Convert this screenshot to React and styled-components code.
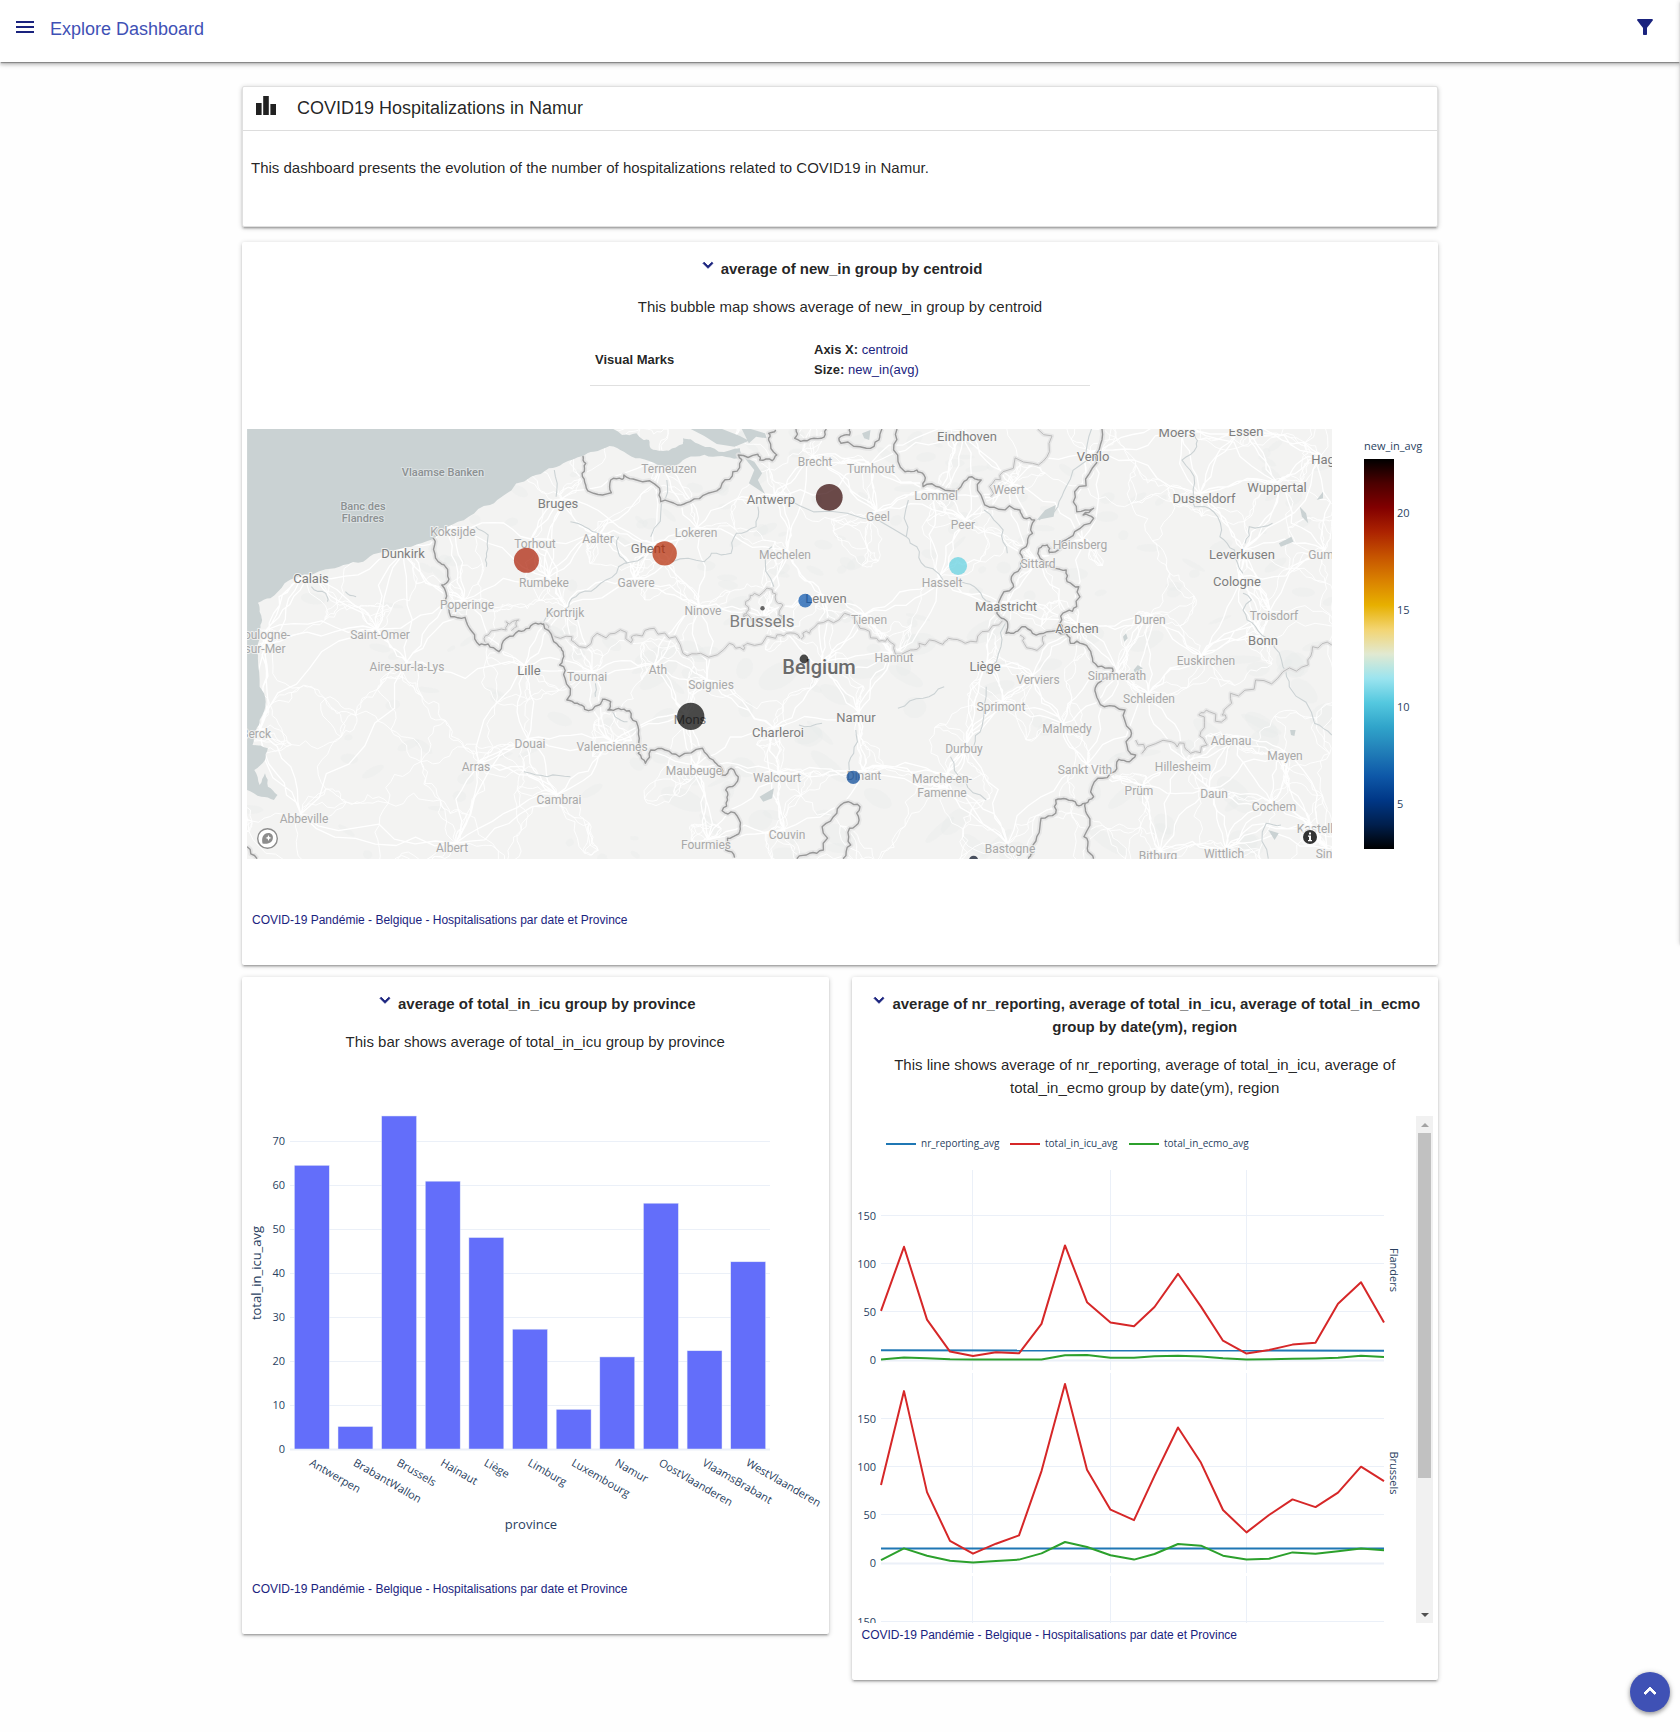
import React, { useRef } from 'react';
import styled, { createGlobalStyle } from 'styled-components';
import { MdMenu, MdFilterAlt, MdExpandMore, MdKeyboardArrowUp } from 'react-icons/md';

const sans = '"Liberation Sans", Arial, sans-serif';
const plotFont = '"Open Sans", Verdana, sans-serif';
const navy = '#1a237e';
const indigo = '#3f51b5';
const plotInk = '#2a3f5f';
const gridInk = '#ebf0f8';

const GlobalStyle = createGlobalStyle`
  *, *::before, *::after { box-sizing: border-box; }
  body {
    margin: 0;
    background: #fefefe;
    color: rgba(0, 0, 0, 0.87);
    font-family: ${sans};
    font-size: 15px;
    line-height: 23px;
  }
`;

/* ---------- page chrome ---------- */

const TopBar = styled.header`
  display: flex;
  align-items: center;
  height: 62px;
  padding: 0 23px 8px 13px;
  background: #fff;
  box-shadow: 0 3px 3px 0 rgba(0, 0, 0, 0.14), 0 1px 7px 0 rgba(0, 0, 0, 0.2),
    0 2px 1px -1px rgba(0, 0, 0, 0.3);
`;

const IconButton = styled.button`
  display: inline-flex;
  padding: 0;
  border: 0;
  background: none;
  color: ${navy};
  font-size: ${(p) => p.$size}px;
  cursor: pointer;
`;

const Brand = styled.a`
  flex: 1;
  margin-left: 13px;
  padding-top: 4px;
  color: ${indigo};
  font-size: 18px;
  text-decoration: none;
`;

const SideDrawer = styled.aside`
  position: fixed;
  top: 0;
  right: -300px;
  width: 300px;
  height: 943px;
  background: #fff;
  box-shadow: 0 2px 2px 0 rgba(0, 0, 0, 0.14), 0 3px 1px -2px rgba(0, 0, 0, 0.12),
    0 1px 5px 0 rgba(0, 0, 0, 0.2);
`;

const Page = styled.main`
  display: flex;
  flex-direction: column;
  gap: 12px;
  max-width: 1196px;
  margin: 0 auto;
  padding: 24px 0 52px;
`;

const Card = styled.section`
  background: #fff;
  border-radius: 2px;
  box-shadow: 0 2px 2px 0 rgba(0, 0, 0, 0.14), 0 3px 1px -2px rgba(0, 0, 0, 0.12),
    0 1px 5px 0 rgba(0, 0, 0, 0.2);
`;

const IntroCard = styled(Card)`
  margin-bottom: 3px;
  border: 1px solid #e0e0e0;
`;

const IntroHeader = styled.div`
  display: flex;
  align-items: center;
  gap: 20px;
  height: 44px;
  padding: 0 12px 4px;
  border-bottom: 1px solid #ddd;
  svg { display: block; }
`;

const IntroTitle = styled.h1`
  margin: 0;
  padding-top: 4px;
  font-size: 18px;
  font-weight: 400;
`;

const IntroText = styled.p`
  margin: 0;
  padding: 25px 8px 47px;
`;

const ChartCard = styled(Card)`
  padding: 15px 5px 35px;
`;

const ChartRow = styled.div`
  display: grid;
  grid-template-columns: 1fr 1fr;
  gap: 23px;
  align-items: start;
`;

const ChartTitle = styled.h2`
  margin: 0 0 15px;
  font-size: 15px;
  font-weight: 700;
  text-align: center;

  button { margin-right: 3px; vertical-align: -1px; height: 16px; align-items: center; }
  path:not([fill='none']) { stroke: currentColor; stroke-width: 1px; }
`;

const ChartText = styled.p`
  margin: 0 0 17px;
  text-align: center;
`;

const SourceLink = styled.a`
  display: block;
  padding: 2px 5px 0;
  color: ${navy};
  font-size: 12px;
  line-height: 20px;
  text-decoration: none;
`;

const MarksTable = styled.table`
  width: 500px;
  margin: 0 auto 15px;
  border-collapse: collapse;
  border-bottom: 1px solid #e0e0e0;
  font-size: 13px;
  line-height: 20px;
  text-align: left;

  th, td { padding: 5px; }
  th { width: 219px; }
  span { color: ${navy}; }
`;

const PlotArea = styled.div`
  height: 507px;
  svg { display: block; width: 100%; }
`;

const MapPlot = styled.div`
  display: grid;
  grid-template-columns: 1fr 101px;
  padding: 28px 0 49px;
  svg { display: block; width: 100%; height: auto; }
`;

const ScrollFrame = styled.div`
  display: flex;
  height: 507px;
`;

const ScrollView = styled.div`
  flex: 1;
  min-width: 0;
  overflow-y: auto;
  scrollbar-width: none;
  svg { display: block; width: 100%; height: 695px; }
`;

const ScrollRail = styled.div`
  display: flex;
  flex-direction: column;
  width: 17px;
  background: #f1f1f1;
`;

const RailButton = styled.button`
  display: flex;
  align-items: center;
  justify-content: center;
  height: 17px;
  padding: 0;
  border: 0;
  background: none;
`;

const Arrow = styled.i`
  border: 4px solid transparent;
  border-top-width: ${(p) => (p.$up ? 0 : 4)}px;
  border-bottom-width: ${(p) => (p.$up ? 4 : 0)}px;
  border-top-color: #505050;
  border-bottom-color: #a3a3a3;
`;

const RailTrack = styled.div`
  flex: 1;
  padding: 0 2px;
`;

const RailThumb = styled.div`
  height: 73%;
  background: #c1c1c1;
`;

const TopFab = styled.button`
  position: fixed;
  right: 10px;
  bottom: 20px;
  display: flex;
  align-items: center;
  justify-content: center;
  width: 40px;
  height: 40px;
  padding: 0 0 2px;
  border: 0;
  border-radius: 50%;
  background: ${indigo};
  color: #fff;
  font-size: 24px;
  box-shadow: 0 2px 4px rgba(0, 0, 0, 0.3), 0 1px 6px rgba(0, 0, 0, 0.2);
  cursor: pointer;

  path:not([fill='none']) { stroke: currentColor; stroke-width: 1px; }
`;

const PlotText = styled.text`
  fill: ${plotInk};
  font-family: ${plotFont};
  font-size: ${(p) => p.$size || 11}px;
`;

/* ---------- map ---------- */

// The map is digitised in two sheets, each with its own grid.
const west = ([x, y]) => [x / 2.8 - 7, y / 3 - 9];
const east = ([x, y]) => [533 + x / 2.3758, y / 3 - 9];

const parse = (s, sheet) => s.trim().split(/\s+/).map((p) => sheet(p.split(',').map(Number)));

const seeded = (seed) => () => {
  seed = (seed * 16807) % 2147483647;
  return seed / 2147483647 - 0.5;
};

const toPath = (pts) => 'M' + pts.map(([x, y]) => `${x.toFixed(1)} ${y.toFixed(1)}`).join('L');

// Midpoint displacement gives surveyed lines their natural wobble.
const roughen = (pts, depth, amount, rnd) => {
  let out = pts;
  for (let d = 0; d < depth; d++) {
    const next = [out[0]];
    for (let i = 1; i < out.length; i++) {
      const [ax, ay] = out[i - 1];
      const [bx, by] = out[i];
      const k = rnd() * amount;
      next.push([(ax + bx) / 2 - (by - ay) * k, (ay + by) / 2 + (bx - ax) * k], out[i]);
    }
    out = next;
  }
  return out;
};

const SEA = `20,27 1045,27 1070,45 1110,40 1130,60 1145,60 1150,85 1180,92 1200,92 1240,72 1240,55
 1262,58 1290,75 1340,95 1400,85 1408,108 1395,115 1350,108 1300,104 1250,115 1210,138 1170,135
 1120,115 1075,95 1035,78 990,95 960,108 905,130 865,145 815,170 740,225 700,255 640,290 580,320
 540,358 480,380 420,395 385,400 345,425 290,435 240,448 160,470 125,490 85,535 50,548 55,575
 62,600 55,630 48,680 50,715 55,800 72,845 55,900 45,930 35,975 78,985 70,1020 40,1050 55,1095
 70,1060 78,1100 105,1125 95,1140 60,1130 20,1110`;
const INLETS = [
  '1262,27 1300,48 1335,72 1385,80 1425,62 1400,48 1350,27',
  '1405,27 1425,70 1445,50 1475,55 1470,40 1430,27',
  '1410,110 1440,150 1425,190 1470,222 1450,180 1462,160 1440,125',
  '1455,1130 1495,1105 1490,1135 1465,1145',
];

const BORDERS_WEST = [
  `540,355 545,375 555,425 575,440 585,478 565,495 575,540 590,590 630,592 650,635 670,675 695,672
   725,695 745,655 780,632 810,625 835,612 850,612 875,655 900,685 905,700 895,735 910,775 915,840
   945,850 965,868 1005,855 1015,838 1038,845 1030,870 1060,865 1090,872 1110,905 1118,955 1115,1000
   1135,1030 1150,990 1190,990 1230,1010 1295,985 1325,1020 1345,1040 1350,1065 1375,1045 1395,1070
   1385,1095 1360,1110 1365,1140 1350,1172 1385,1178 1400,1220 1390,1245 1365,1255 1360,1290 1385,1313`,
  `960,108 968,130 958,160 968,195 990,220 1040,218 1038,180 1070,178 1075,165 1110,180 1175,205
   1178,245 1225,255 1260,245 1310,220 1350,190 1380,155 1405,120 1395,105 1450,103 1455,120 1490,122
   1503,105 1480,60 1480,40 1500,30`,
  '20,1280 48,1316',
];
const BORDERS_EAST = [
  '38,27 35,55 65,62 98,55 110,27',
  '165,27 165,45 140,55 145,70 205,85 235,60 242,27',
  `278,27 270,90 297,155 325,150 342,165 340,200 380,202 430,200 448,172 478,180 482,240 520,268
   570,270 580,295 605,300 600,340 585,380 570,400 572,430 550,470 555,500 520,545 522,590 540,605
   537,640 560,635 575,620 600,640 635,635 680,640 690,670 720,672 740,705 755,740 790,745 785,770
   755,790 750,820 770,860 820,870 833,930 822,965 845,1005 830,1025 805,1018 795,1055 755,1075
   745,1130 725,1150 728,1180 722,1250 730,1285 745,1316`,
  `765,27 758,90 735,160 700,215 705,275 745,265 720,285 745,295 700,335 670,365 655,395 640,398
   635,375 615,385 618,415 650,445 680,450 682,485 710,500 705,560 680,575 665,610 680,640`,
  '725,1150 705,1155 680,1137 655,1140 655,1180 620,1195 610,1250 600,1300 590,1316',
  '40,1316 70,1300 103,1290 100,1220 135,1180 162,1145 190,1160 188,1200 165,1225 168,1275 150,1316',
];
const REGIONS_WEST = [
  '690,670 695,645 745,630 745,605 780,600 775,620 760,632',
  `850,612 870,635 930,650 950,680 1000,640 1050,640 1095,668 1110,645 1160,625 1220,650 1240,700
   1290,700 1370,670 1410,690 1420,670 1500,655 1530,640 1568,655`,
  '1425,540 1440,520 1490,508 1500,540 1520,555 1520,590 1490,612 1440,615 1410,590 1425,570 1425,540',
];
const REGIONS_EAST = [
  `50,658 70,640 90,610 140,600 190,625 230,655 255,655 270,685 310,690 330,670 380,670 400,655
   440,670 480,635 530,600`,
  '612,27 640,95 600,130 530,155 505,190 500,230',
  `1311,675 1265,680 1255,735 1195,755 1130,780 1070,820 1055,870 1060,895 1020,875 995,885 1000,935
   1015,975 975,1000 960,970 930,965 860,1000 845,960`,
  '570,645 580,670 620,680 632,645',
];
const RIVERS_WEST = [
  '1195,180 1180,250 1150,350',
  '1130,410 1060,440 1010,490 950,520 920,560 850,605',
  '1450,260 1445,320 1390,340 1375,400 1320,400 1300,425 1210,425',
  '925,305 965,320 1010,345',
  '880,150 885,230',
  '660,320 695,345 690,400 690,440',
  '200,500 240,520 245,545',
  '295,515 325,530',
  '1030,860 1050,890 1085,905',
  '795,1055 860,1070 925,1070',
  '1490,380 1470,400 1495,500',
  '1060,350 1060,400 1085,430',
  '995,790 995,830',
];
const RIVERS_EAST = [
  '985,45 990,80 955,120 985,190 985,260 1030,275 1045,350 1080,390 1100,460',
  '1100,520 1120,540 1100,570 1130,620 1170,660 1195,740 1210,800 1270,910 1311,945',
  '740,27 730,120 680,200 660,260 615,300',
  '540,600 525,680 490,760',
  '490,800 480,920 460,980',
  '10,230 160,280 300,350 325,380 345,440 400,500',
  '300,350 305,240',
  '485,270 530,330 540,400',
  '430,485 470,510 500,545',
  '280,865 340,835 390,800',
  '180,930 175,1000 165,1060',
  '405,1010 440,1080 490,1140',
  '1105,370 1115,320 1170,310',
  '1160,1316 1155,1210 1190,1215',
  '45,915 100,910',
];
const LAKES_EAST = [
  '630,270 655,255 650,290 610,300',
  '195,40 215,30 212,60 200,55',
  '1185,370 1215,350 1220,365 1190,380',
  '840,750 850,735 862,745 845,762',
  '815,650 822,640 826,655 818,665',
  '1275,240 1290,215 1290,235',
  '1235,260 1250,280 1255,310 1240,290',
  '1212,930 1225,930 1222,948 1214,945',
  '1160,1230 1185,1240 1175,1260',
];

const LABELS_WEST = [
  ['Vlaamse Banken', 567, 168, 's'], ['Banc des', 345, 269, 's'], ['Flandres', 345, 305, 's'],
  ['Terneuzen', 1201, 157], ['Bruges', 889, 263, 'c'], ['Antwerp', 1486, 252, 'c'],
  ['Koksijde', 595, 348], ['Dunkirk', 456, 413, 'c'], ['Calais', 199, 488, 'c'],
  ['Torhout', 826, 384], ['Aalter', 1001, 367], ['Lokeren', 1278, 350], ['Ghent', 1143, 397, 'c'],
  ['Rumbeke', 852, 499], ['Gavere', 1110, 501], ['Poperinge', 635, 566], ['Kortrijk', 909, 590],
  ['Ninove', 1296, 583], ['Brussels', 1462, 621, 'b'], ['Saint-Omer', 392, 655],
  ['oulogne-', 76, 657], ['sur-Mer', 70, 698], ['Aire-sur-la-Lys', 467, 753], ['Lille', 810, 763, 'c'],
  ['Tournai', 971, 781], ['Ath', 1169, 760], ['Soignies', 1320, 806], ['Mons', 1260, 912, 'c'],
  ['Berck', 46, 954], ['Douai', 812, 983], ['Valenciennes', 1041, 993], ['Arras', 660, 1051],
  ['Maubeuge', 1271, 1063], ['Cambrai', 892, 1150], ['Walcourt', 1504, 1084],
  ['Abbeville', 179, 1209], ['Albert', 594, 1296], ['Fourmies', 1306, 1285], ['Couvin', 1532, 1255],
  ['Charleroi', 1507, 950, 'c'],
];
const LABELS_EAST = [
  ['Eindhoven', 445, 61, 'c'], ['Brecht', 83, 136], ['Turnhout', 216, 159], ['Venlo', 743, 121, 'c'],
  ['Moers', 943, 50, 'c'], ['Essen', 1108, 46, 'c'], ['Hag', 1289, 132, 'c'], ['Wuppertal', 1180, 214, 'c'],
  ['Dusseldorf', 1007, 248, 'c'], ['Weert', 545, 220], ['Lommel', 371, 240], ['Geel', 233, 301],
  ['Peer', 435, 326], ['Mechelen', 13, 417], ['Heinsberg', 713, 385], ['Sittard', 612, 443],
  ['Leverkusen', 1098, 416, 'c'], ['Gum', 1286, 417], ['Hasselt', 385, 501], ['Cologne', 1085, 497, 'c'],
  ['Leuven', 109, 549, 'c'], ['Maastricht', 537, 573, 'c'], ['Tienen', 212, 610], ['Aachen', 706, 638, 'c'],
  ['Duren', 879, 611], ['Troisdorf', 1173, 600], ['Bonn', 1147, 673, 'c'], ['Belgium', 93, 761, 'B'],
  ['Hannut', 272, 724], ['Liège', 486, 752, 'c'], ['Euskirchen', 1011, 733], ['Verviers', 612, 792],
  ['Simmerath', 800, 780], ['Schleiden', 876, 848], ['Sprimont', 525, 871], ['Namur', 180, 904, 'c'],
  ['Malmedy', 682, 938], ['Adenau', 1072, 974], ['Durbuy', 436, 999], ['Mayen', 1199, 1020],
  ['Hillesheim', 958, 1051], ['Sankt Vith', 724, 1060], ['Dinant', 200, 1078], ['Marche-en-', 386, 1088],
  ['Famenne', 386, 1130], ['Prüm', 854, 1123], ['Daun', 1030, 1132], ['Cochem', 1174, 1173],
  ['Kastell', 1272, 1238], ['Bastogne', 547, 1299], ['Wittlich', 1054, 1312], ['Bitburg', 898, 1320],
  ['Sin', 1293, 1312],
];

const LABEL_STYLE = {
  m: { size: 12, fill: '#a8a8a8', weight: 400 },
  s: { size: 11, fill: '#8c9192', weight: 500 },
  c: { size: 13, fill: '#7e7e7e', weight: 400 },
  b: { size: 17, fill: '#7e7e7e', weight: 400 },
  B: { size: 20, fill: '#6b6b6b', weight: 500 },
};

const MapLabel = styled.text`
  font-family: Roboto, sans-serif;
  font-size: ${(p) => LABEL_STYLE[p.$kind].size}px;
  font-weight: ${(p) => LABEL_STYLE[p.$kind].weight};
  fill: ${(p) => LABEL_STYLE[p.$kind].fill};
  stroke: ${(p) => (p.$kind === 's' ? 'rgba(225,230,232,0.8)' : 'rgba(246,246,245,0.8)')};
  stroke-width: 2px;
  stroke-linejoin: round;
  paint-order: stroke;
  text-anchor: middle;
`;

const BUBBLES = [
  { at: west([802, 421]), r: 12.5, fill: '#a91a00' },
  { at: west([1189, 400]), r: 12.2, fill: '#b32500' },
  { at: west([1262, 889]), r: 13.6, fill: '#000' },
  { at: east([117, 232]), r: 13.4, fill: '#2f0000' },
  { at: east([423, 438]), r: 9, fill: '#5dcee0' },
  { at: east([60, 542]), r: 6.9, fill: '#024fa9' },
  { at: east([57, 717]), r: 4.4, fill: '#000' },
  { at: east([174, 1072]), r: 6.7, fill: '#004396' },
  { at: east([460, 1321]), r: 4.6, fill: '#000a20' },
];

const labels = [
  ...LABELS_WEST.map(([t, x, y, k]) => ({ t, at: west([x, y]), k: k || 'm' })),
  ...LABELS_EAST.map(([t, x, y, k]) => ({ t, at: east([x, y]), k: k || 'm' })),
];

const buildRoads = () => {
  const rnd = seeded(4211);
  const towns = labels.filter((l) => l.k !== 's').map((l) => [l.at[0] + rnd() * 10, l.at[1] - 9]);
  const nodes = [...towns];
  for (let x = -20; x < 1120; x += 44) {
    for (let y = -20; y < 460; y += 44) nodes.push([x + rnd() * 50, y + rnd() * 50]);
  }
  const link = (from, pool, count, rough) => {
    const near = pool
      .map((p) => ({ p, d: Math.hypot(p[0] - from[0], p[1] - from[1]) }))
      .filter((n) => n.d > 1)
      .sort((a, b) => a.d - b.d)
      .slice(0, count);
    return near.map((n) => toPath(roughen([from, n.p], 3, rough, rnd)));
  };
  return {
    major: towns.flatMap((n) => link(n, towns, 4, 0.3)).join(''),
    minor: nodes.flatMap((n) => link(n, nodes, 3, 0.5)).join(''),
  };
};

const buildTerrain = () => {
  const rnd = seeded(977);
  const spots = [];
  for (let i = 0; i < 260; i++) {
    const x = (rnd() + 0.5) * 1085;
    const y = (rnd() + 0.5) * 430;
    const hilly = x > 400 && y > 200;
    spots.push({ x, y, rx: 4 + (rnd() + 0.5) * (hilly ? 20 : 9), ry: 2 + (rnd() + 0.5) * (hilly ? 10 : 4), a: rnd() * 90 });
  }
  return spots;
};

const lines = (items, sheet, depth, amount, seed) => {
  const rnd = seeded(seed);
  return items.map((s) => toPath(roughen(parse(s, sheet), depth, amount, rnd))).join('');
};

const roads = buildRoads();
const terrain = buildTerrain();
const sea = toPath(roughen(parse(SEA, west), 2, 0.2, seeded(17))) + 'Z';
const inlets = INLETS.map((s) => toPath(parse(s, west)) + 'Z').join('');
const lakes = LAKES_EAST.map((s) => toPath(parse(s, east)) + 'Z').join('');
const rivers = lines(RIVERS_WEST, west, 2, 0.3, 31) + lines(RIVERS_EAST, east, 2, 0.3, 32);
const borders = lines(BORDERS_WEST, west, 2, 0.45, 51) + lines(BORDERS_EAST, east, 2, 0.45, 52);
const regions = lines(REGIONS_WEST, west, 2, 0.8, 71) + lines(REGIONS_EAST, east, 2, 0.8, 72);

function BubbleMap() {
  return (
    <svg viewBox="0 0 1085 430" role="img" aria-label="Bubble map">
      <rect width="1085" height="430" fill="#f3f3f2" />
      {terrain.map((s, i) => (
        <ellipse key={i} cx={s.x} cy={s.y} rx={s.rx} ry={s.ry} fill="#e9eaea" opacity="0.35" transform={`rotate(${s.a} ${s.x} ${s.y})`} />
      ))}
      <g fill="none" stroke="#fff" strokeLinejoin="round">
        <path d={roads.minor} strokeWidth="0.9" />
        <path d={roads.major} strokeWidth="1.3" />
      </g>
      <path d={rivers} fill="none" stroke="#cbd2d4" strokeWidth="1.1" />
      <path d={sea} fill="#cad2d3" />
      <path d={inlets} fill="#cad2d3" />
      <path d={lakes} fill="#cad2d3" />
      <g fill="none" strokeLinejoin="round">
        <path d={regions} stroke="#e6e6e6" strokeWidth="4" />
        <path d={regions} stroke="#bcbcbc" strokeWidth="1" />
        <path d={borders} stroke="#e2e2e2" strokeWidth="5" opacity="0.8" />
        <path d={borders} stroke="#979797" strokeWidth="1.4" />
      </g>
      <circle cx="515.5" cy="179.3" r="2.2" fill="#666" />
      {labels.map((l) => (
        <MapLabel key={l.t} $kind={l.k} x={Math.round(l.at[0])} y={Math.ceil(l.at[1])}>{l.t}</MapLabel>
      ))}
      {BUBBLES.map((b, i) => (
        <circle key={i} cx={b.at[0]} cy={b.at[1]} r={b.r} fill={b.fill} opacity="0.7" />
      ))}
      <g transform="translate(20.5 409.5)">
        <circle r="9.8" fill="#fff" stroke="#8d8d8d" strokeWidth="1.4" />
        <path d="M-5 5C-6 0-5-5 1-5.400C4-5.400 5.600-3 5.400-.5C5 5-1 6-5 5Z" fill="#8d8d8d" />
        <path d="M1-3.600L1.900-1.400 4-.6 1.900.3 1 2.400.1.300-2-.6.100-1.400Z" fill="#fff" />
      </g>
      <g transform="translate(1063 408)">
        <circle r="10" fill="#fff" opacity="0.6" />
        <circle r="7" fill="#333" />
        <path d="M-1-4.500h2v2h-2zM-2-1.500h3v4.500h1v1.200h-4V3h1V-.3h-1z" fill="#fff" />
      </g>
    </svg>
  );
}

const ICEFIRE = ['#000000', '#4c0000', '#820000', '#ac2301', '#c65400', '#da8200', '#e7b000', '#f3d573',
  '#e1e9d1', '#9be4ef', '#54c8df', '#30a4ca', '#217eb8', '#0e58a8', '#003786', '#001f4d', '#000000'];

function ColorBar() {
  return (
    <svg viewBox="0 0 101 430" role="img" aria-label="Colour scale">
      <defs>
        <linearGradient id="icefire" x1="0" y1="0" x2="0" y2="1">
          {ICEFIRE.map((c, i) => <stop key={i} offset={i / 16} stopColor={c} />)}
        </linearGradient>
      </defs>
      <PlotText x="32" y="21">new_in_avg</PlotText>
      <rect x="32" y="30" width="30" height="390" fill="url(#icefire)" />
      {[20, 15, 10, 5].map((v, i) => (
        <PlotText key={v} x="65" y={88 + i * 97}>{v}</PlotText>
      ))}
    </svg>
  );
}

/* ---------- bar chart ---------- */

const PROVINCES = [
  ['Antwerpen', 64.4], ['BrabantWallon', 5.1], ['Brussels', 75.6], ['Hainaut', 60.8], ['Liège', 48],
  ['Limburg', 27.2], ['Luxembourg', 9], ['Namur', 20.9], ['OostVlaanderen', 55.8],
  ['VlaamsBrabant', 22.3], ['WestVlaanderen', 42.5],
];

function ProvinceBars() {
  const left = 43;
  const right = 523;
  const zero = 379;
  const unit = 4.405;
  const step = (right - left) / PROVINCES.length;
  return (
    <svg viewBox="0 0 576 507" height="507" preserveAspectRatio="xMinYMin meet" role="img" aria-label="Bar chart">
      {[0, 10, 20, 30, 40, 50, 60, 70].map((v) => {
        const y = Math.round(zero - v * unit);
        return (
          <g key={v}>
            <path d={`M${left} ${y + 0.5}H${right}`} stroke={gridInk} strokeWidth={v ? 1 : 2} />
            <PlotText x="38" y={y + 4} textAnchor="end">{v}</PlotText>
          </g>
        );
      })}
      {PROVINCES.map(([name, v], i) => {
        const x = left + step * i;
        return (
          <g key={name}>
            <rect x={x + step * 0.1} y={zero - v * unit} width={step * 0.8} height={v * unit}
              fill="#636efa" stroke="#e5ecf6" strokeWidth="0.5" />
            <PlotText transform={`translate(${x + step / 2 - 3} ${zero + 16}) rotate(30)`}>{name}</PlotText>
          </g>
        );
      })}
      <PlotText $size={13} x="284" y="459" textAnchor="middle">province</PlotText>
      <PlotText $size={13} transform="translate(14 203) rotate(-90)" textAnchor="middle">total_in_icu_avg</PlotText>
    </svg>
  );
}

/* ---------- line chart ---------- */

const MONTHS = [24, 47, 70, 93, 116, 139, 162, 184.500, 208, 230, 253.500, 277, 297.500, 321, 344, 366, 389.500, 412, 435.500, 458.500, 481, 504, 527];

const PANELS = [
  {
    region: 'Flanders', top: 54, ticks: [0, 50, 100, 150], reporting: [10, 9.7],
    icu: [51, 117.5, 42, 8.7, 4, 8, 7, 37.5, 119, 60, 39, 35, 55, 89.5, 55.5, 20, 6.6, 10.4, 16, 18, 58.5, 80.7, 39],
    ecmo: [0.5, 2.5, 1.8, 0.7, 0.4, 0.4, 0.4, 0.6, 5, 5.2, 2.4, 2.4, 3.8, 4.5, 3.6, 1.8, 0.5, 0.8, 1.2, 1.6, 2.3, 4.5, 3],
  },
  {
    region: 'Brussels', top: 257, ticks: [0, 50, 100, 150], reporting: [15, 15],
    icu: [81, 178.5, 73.6, 23, 9.7, 20, 28.7, 95.4, 186, 96.8, 55.3, 44.6, 90.5, 140.7, 104, 55, 31.8, 49.8, 66, 58, 73, 100, 85],
    ecmo: [3, 15.2, 7.6, 2.4, 0.4, 2, 3.5, 10, 21.8, 16.6, 8, 3.5, 9.3, 19.7, 18, 7.6, 3.5, 4.5, 11, 9.7, 12.1, 15.2, 13.2],
  },
  { region: null, top: 460, ticks: [150] },
];

const LEGEND = [
  ['nr_reporting_avg', 29, '#1f77b4'],
  ['total_in_icu_avg', 153, '#d62728'],
  ['total_in_ecmo_avg', 272, '#2ca02c'],
];

function RegionLines() {
  return (
    <svg viewBox="0 0 559 695" preserveAspectRatio="xMinYMin meet" role="img" aria-label="Line chart">
      {LEGEND.map(([name, x, color]) => (
        <g key={name}>
          <path d={`M${x} 28h30`} stroke={color} strokeWidth="2" />
          <PlotText $size={10} x={x + 35} y="31">{name}</PlotText>
        </g>
      ))}
      {PANELS.map((p) => {
        const zero = p.top + 190;
        const y = (v) => zero - v * 0.963;
        const series = (vals) => toPath(vals.map((v, i) => [MONTHS[i], y(v)]));
        return (
          <g key={p.top} fill="none">
            {[115.5, 253.5, 389.5].map((x) => (
              <path key={x} d={`M${x} ${p.top}V${p.top + 200}`} stroke={gridInk} />
            ))}
            {p.ticks.map((v) => (
              <g key={v}>
                <path d={`M24 ${Math.floor(y(v)) + 0.5}H527`} stroke={gridInk} strokeWidth={v ? 1 : 2} />
                <PlotText x="19" y={Math.round(y(v)) + 4} textAnchor="end">{v}</PlotText>
              </g>
            ))}
            {p.icu && (
              <g strokeWidth="2" strokeLinejoin="round">
                <path d={`M24 ${y(p.reporting[0])}L527 ${y(p.reporting[1])}`} stroke="#1f77b4" />
                <path d={series(p.icu)} stroke="#d62728" />
                <path d={series(p.ecmo)} stroke="#2ca02c" />
              </g>
            )}
            {p.region && (
              <PlotText transform={`translate(533 ${p.top + 100}) rotate(90)`} textAnchor="middle">{p.region}</PlotText>
            )}
          </g>
        );
      })}
    </svg>
  );
}

function ScrollablePlot({ children }) {
  const view = useRef(null);
  const nudge = (dy) => () => view.current.scrollBy(0, dy);
  return (
    <ScrollFrame>
      <ScrollView ref={view}>{children}</ScrollView>
      <ScrollRail>
        <RailButton aria-label="Scroll up" onClick={nudge(-40)}><Arrow $up /></RailButton>
        <RailTrack><RailThumb /></RailTrack>
        <RailButton aria-label="Scroll down" onClick={nudge(40)}><Arrow /></RailButton>
      </ScrollRail>
    </ScrollFrame>
  );
}

function Panel({ title, text, children }) {
  return (
    <ChartCard>
      <ChartTitle>
        <IconButton $size={20} aria-label="Toggle details"><MdExpandMore /></IconButton>
        {title}
      </ChartTitle>
      <ChartText>{text}</ChartText>
      {children}
      <SourceLink href="#source">COVID-19 Pandémie - Belgique - Hospitalisations par date et Province</SourceLink>
    </ChartCard>
  );
}

export default function App() {
  return (
    <>
      <GlobalStyle />
      <TopBar>
        <IconButton $size={24} aria-label="Menu"><MdMenu /></IconButton>
        <Brand href="#dashboard">Explore Dashboard</Brand>
        <IconButton $size={24} aria-label="Filters"><MdFilterAlt /></IconButton>
      </TopBar>
      <Page>
        <IntroCard>
          <IntroHeader>
            <svg width="22" height="22" viewBox="0 0 22 22" fill="#212121" aria-hidden="true">
              <path d="M1 7h5.600v12H1zM8.200 0h5.600v19H8.200zM15.400 8H21v11h-5.600z" />
            </svg>
            <IntroTitle>COVID19 Hospitalizations in Namur</IntroTitle>
          </IntroHeader>
          <IntroText>
            This dashboard presents the evolution of the number of hospitalizations related to COVID19 in Namur.
          </IntroText>
        </IntroCard>

        <Panel title="average of new_in group by centroid" text="This bubble map shows average of new_in group by centroid">
          <MarksTable>
            <tbody>
              <tr>
                <th scope="row">Visual Marks</th>
                <td>
                  <b>Axis X:</b> <span>centroid</span><br />
                  <b>Size:</b> <span>new_in(avg)</span>
                </td>
              </tr>
            </tbody>
          </MarksTable>
          <MapPlot>
            <BubbleMap />
            <ColorBar />
          </MapPlot>
        </Panel>

        <ChartRow>
          <Panel title="average of total_in_icu group by province" text="This bar shows average of total_in_icu group by province">
            <PlotArea><ProvinceBars /></PlotArea>
          </Panel>
          <Panel
            title="average of nr_reporting, average of total_in_icu, average of total_in_ecmo group by date(ym), region"
            text="This line shows average of nr_reporting, average of total_in_icu, average of total_in_ecmo group by date(ym), region"
          >
            <ScrollablePlot><RegionLines /></ScrollablePlot>
          </Panel>
        </ChartRow>
      </Page>
      <SideDrawer aria-hidden="true" />
      <TopFab aria-label="Back to top"><MdKeyboardArrowUp /></TopFab>
    </>
  );
}
